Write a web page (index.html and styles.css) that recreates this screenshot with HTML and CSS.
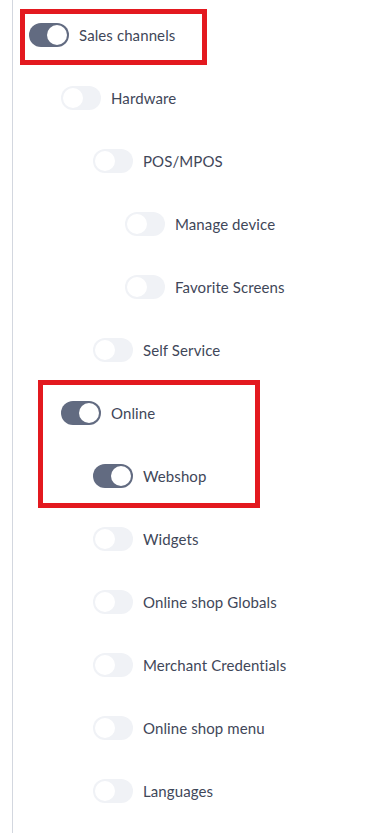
FILE: index.html
```html
<!DOCTYPE html>
<html>
<head>
<meta charset="utf-8">
<link rel="stylesheet" href="styles.css">
</head>
<body>
<div class="page">
  <ul class="tree">
    <li class="row lvl0"><span class="toggle on"></span><span class="label">Sales channels</span></li>
    <li class="row lvl1"><span class="toggle"></span><span class="label">Hardware</span></li>
    <li class="row lvl2"><span class="toggle"></span><span class="label">POS/MPOS</span></li>
    <li class="row lvl3"><span class="toggle"></span><span class="label">Manage device</span></li>
    <li class="row lvl3"><span class="toggle"></span><span class="label">Favorite Screens</span></li>
    <li class="row lvl2"><span class="toggle"></span><span class="label">Self Service</span></li>
    <li class="row lvl1"><span class="toggle on"></span><span class="label">Online</span></li>
    <li class="row lvl2"><span class="toggle on"></span><span class="label">Webshop</span></li>
    <li class="row lvl2"><span class="toggle"></span><span class="label">Widgets</span></li>
    <li class="row lvl2"><span class="toggle"></span><span class="label">Online shop Globals</span></li>
    <li class="row lvl2"><span class="toggle"></span><span class="label">Merchant Credentials</span></li>
    <li class="row lvl2"><span class="toggle"></span><span class="label">Online shop menu</span></li>
    <li class="row lvl2"><span class="toggle"></span><span class="label">Languages</span></li>
  </ul>
  <div class="mark mark-a"></div>
  <div class="mark mark-b"></div>
</div>
</body>
</html>
```
FILE: styles.css
```css
html, body {
  margin: 0;
  padding: 0;
  background: #ffffff;
}
body {
  font-family: "Lato", "Open Sans", sans-serif;
  color: #3f4759;
}
.page {
  position: relative;
  min-height: 833px;
  padding-left: 12px;
}
.tree {
  list-style: none;
  margin: 0;
  padding: 3px 0 0 16px;
  border-left: 1px solid #d3d7df;
  min-height: 830px;
}
.row {
  display: flex;
  align-items: center;
  height: 63px;
}
.lvl1 { padding-left: 32px; }
.lvl2 { padding-left: 64px; }
.lvl3 { padding-left: 96px; }
.toggle {
  flex: none;
  box-sizing: border-box;
  width: 40px;
  height: 24px;
  border-radius: 12px;
  background: #f0f2f6;
  padding: 2px;
  display: flex;
  justify-content: flex-start;
}
.toggle::after {
  content: "";
  width: 20px;
  height: 20px;
  border-radius: 50%;
  background: #ffffff;
}
.toggle.on {
  background: #626b81;
  justify-content: flex-end;
}
.label {
  margin-left: 10px;
  font-size: 15px;
  letter-spacing: 0.1px;
}
.mark {
  position: absolute;
  border: 5px solid #e3191f;
  box-sizing: border-box;
}
.mark-a {
  left: 20px;
  top: 9px;
  width: 187px;
  height: 56px;
}
.mark-b {
  left: 38px;
  top: 380px;
  width: 222px;
  height: 128px;
}
```
